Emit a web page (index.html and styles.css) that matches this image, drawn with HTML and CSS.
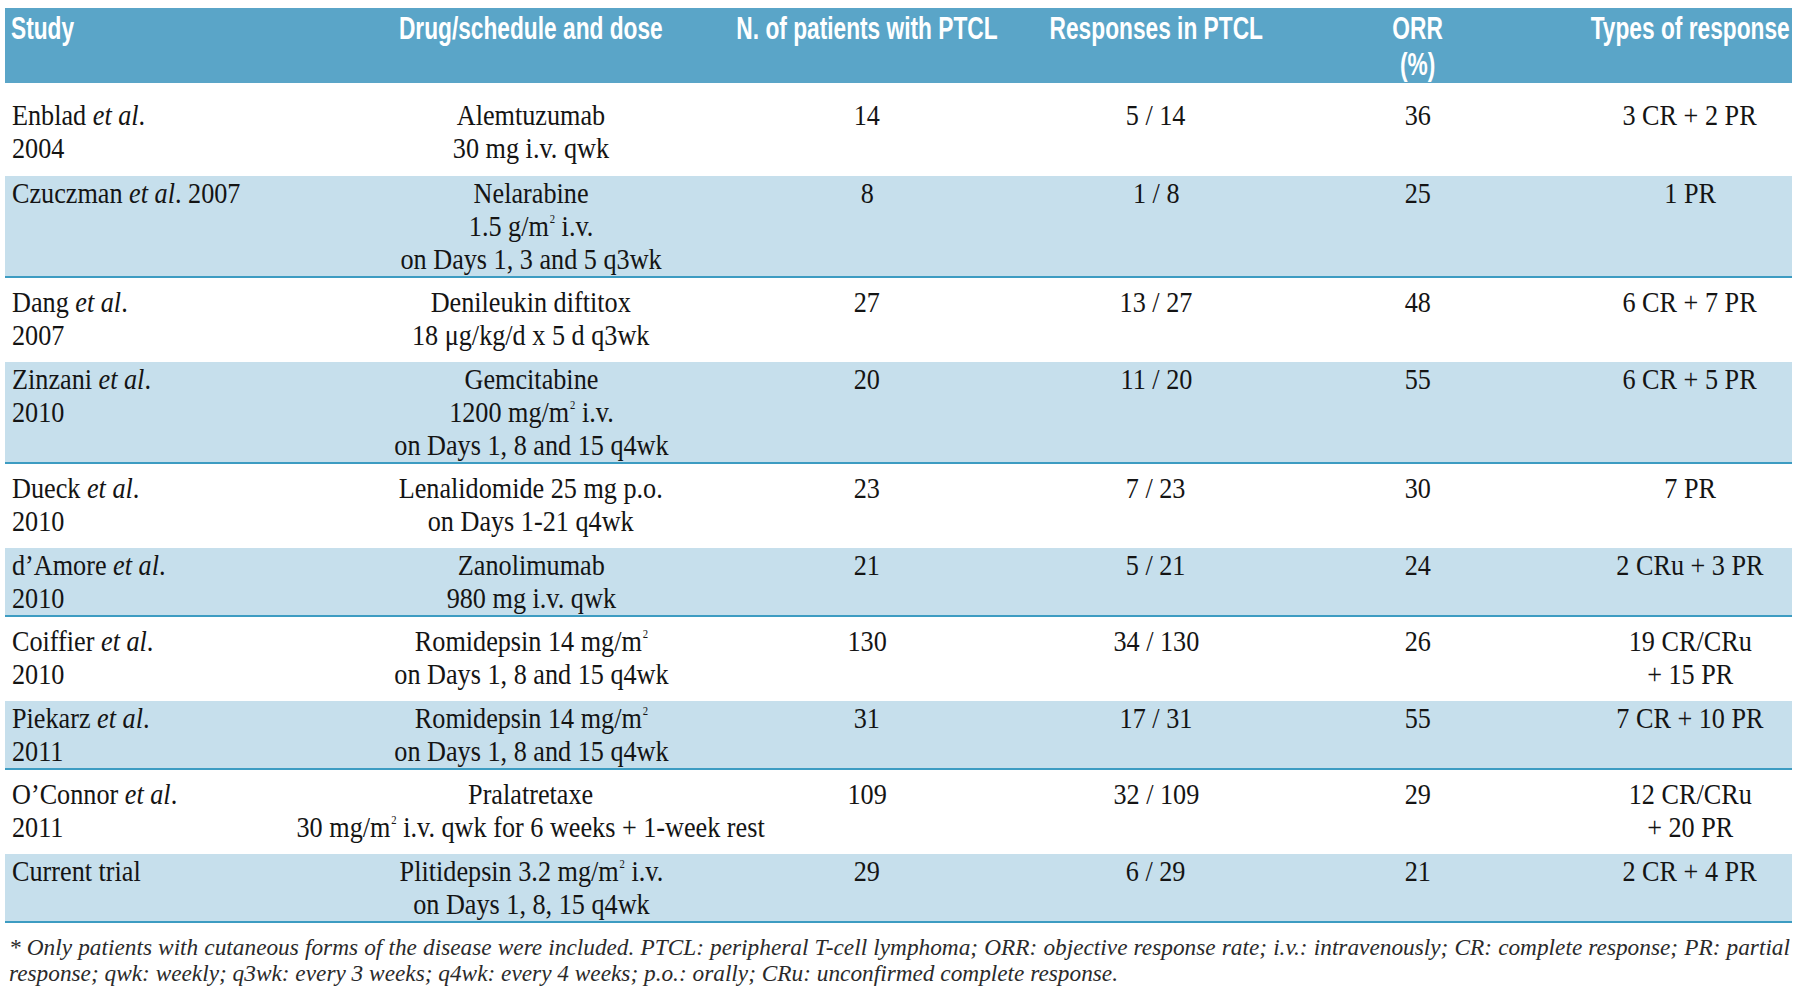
FILE: index.html
```html
<!DOCTYPE html>
<html lang="en">
<head>
<meta charset="utf-8">
<title>PTCL trials</title>
<link rel="stylesheet" href="styles.css">
</head>
<body>
<div class="table">
  <div class="row head">
    <div class="cell study"><span class="t">Study</span></div>
    <div class="cell"><span class="t">Drug/schedule and dose</span></div>
    <div class="cell"><span class="t">N. of patients with PTCL</span></div>
    <div class="cell"><span class="t">Responses in PTCL</span></div>
    <div class="cell"><span class="t">ORR<br>(%)</span></div>
    <div class="cell"><span class="t">Types of response</span></div>
  </div>
  <div class="row white first">
    <div class="cell study"><span class="t">Enblad <i>et al</i>.<br>2004</span></div>
    <div class="cell"><span class="t">Alemtuzumab<br>30 mg i.v. qwk</span></div>
    <div class="cell"><span class="t">14</span></div>
    <div class="cell"><span class="t">5 / 14</span></div>
    <div class="cell"><span class="t">36</span></div>
    <div class="cell"><span class="t">3 CR + 2 PR</span></div>
  </div>
  <div class="row blue">
    <div class="cell study"><span class="t">Czuczman <i>et al</i>. 2007</span></div>
    <div class="cell"><span class="t">Nelarabine<br>1.5 g/m<sup>2</sup> i.v.<br>on Days 1, 3 and 5 q3wk</span></div>
    <div class="cell"><span class="t">8</span></div>
    <div class="cell"><span class="t">1 / 8</span></div>
    <div class="cell"><span class="t">25</span></div>
    <div class="cell"><span class="t">1 PR</span></div>
  </div>
  <div class="row white">
    <div class="cell study"><span class="t">Dang <i>et al</i>.<br>2007</span></div>
    <div class="cell"><span class="t">Denileukin diftitox<br>18 &mu;g/kg/d x 5 d q3wk</span></div>
    <div class="cell"><span class="t">27</span></div>
    <div class="cell"><span class="t">13 / 27</span></div>
    <div class="cell"><span class="t">48</span></div>
    <div class="cell"><span class="t">6 CR + 7 PR</span></div>
  </div>
  <div class="row blue">
    <div class="cell study"><span class="t">Zinzani <i>et al</i>.<br>2010</span></div>
    <div class="cell"><span class="t">Gemcitabine<br>1200 mg/m<sup>2</sup> i.v.<br>on Days 1, 8 and 15 q4wk</span></div>
    <div class="cell"><span class="t">20</span></div>
    <div class="cell"><span class="t">11 / 20</span></div>
    <div class="cell"><span class="t">55</span></div>
    <div class="cell"><span class="t">6 CR + 5 PR</span></div>
  </div>
  <div class="row white">
    <div class="cell study"><span class="t">Dueck <i>et al</i>.<br>2010</span></div>
    <div class="cell"><span class="t">Lenalidomide 25 mg p.o.<br>on Days 1-21 q4wk</span></div>
    <div class="cell"><span class="t">23</span></div>
    <div class="cell"><span class="t">7 / 23</span></div>
    <div class="cell"><span class="t">30</span></div>
    <div class="cell"><span class="t">7 PR</span></div>
  </div>
  <div class="row blue">
    <div class="cell study"><span class="t">d&rsquo;Amore <i>et al</i>.<br>2010</span></div>
    <div class="cell"><span class="t">Zanolimumab<br>980 mg i.v. qwk</span></div>
    <div class="cell"><span class="t">21</span></div>
    <div class="cell"><span class="t">5 / 21</span></div>
    <div class="cell"><span class="t">24</span></div>
    <div class="cell"><span class="t">2 CRu + 3 PR</span></div>
  </div>
  <div class="row white">
    <div class="cell study"><span class="t">Coiffier <i>et al</i>.<br>2010</span></div>
    <div class="cell"><span class="t">Romidepsin 14 mg/m<sup>2</sup><br>on Days 1, 8 and 15 q4wk</span></div>
    <div class="cell"><span class="t">130</span></div>
    <div class="cell"><span class="t">34 / 130</span></div>
    <div class="cell"><span class="t">26</span></div>
    <div class="cell"><span class="t">19 CR/CRu<br>+ 15 PR</span></div>
  </div>
  <div class="row blue">
    <div class="cell study"><span class="t">Piekarz <i>et al</i>.<br>2011</span></div>
    <div class="cell"><span class="t">Romidepsin 14 mg/m<sup>2</sup><br>on Days 1, 8 and 15 q4wk</span></div>
    <div class="cell"><span class="t">31</span></div>
    <div class="cell"><span class="t">17 / 31</span></div>
    <div class="cell"><span class="t">55</span></div>
    <div class="cell"><span class="t">7 CR + 10 PR</span></div>
  </div>
  <div class="row white">
    <div class="cell study"><span class="t">O&rsquo;Connor <i>et al</i>.<br>2011</span></div>
    <div class="cell"><span class="t">Pralatretaxe<br>30 mg/m<sup>2</sup> i.v. qwk for 6 weeks + 1-week rest</span></div>
    <div class="cell"><span class="t">109</span></div>
    <div class="cell"><span class="t">32 / 109</span></div>
    <div class="cell"><span class="t">29</span></div>
    <div class="cell"><span class="t">12 CR/CRu<br>+ 20 PR</span></div>
  </div>
  <div class="row blue">
    <div class="cell study"><span class="t">Current trial</span></div>
    <div class="cell"><span class="t">Plitidepsin 3.2 mg/m<sup>2</sup> i.v.<br>on Days 1, 8, 15 q4wk</span></div>
    <div class="cell"><span class="t">29</span></div>
    <div class="cell"><span class="t">6 / 29</span></div>
    <div class="cell"><span class="t">21</span></div>
    <div class="cell"><span class="t">2 CR + 4 PR</span></div>
  </div>
</div>
<p class="note">* Only patients with cutaneous forms of the disease were included. PTCL: peripheral T-cell lymphoma; ORR: objective response rate; i.v.: intravenously; CR: complete response; PR: partial response; qwk: weekly; q3wk: every 3 weeks; q4wk: every 4 weeks; p.o.: orally; CRu: unconfirmed complete response.</p>
</body>
</html>
```

FILE: styles.css
```css
html, body {
  margin: 0;
  padding: 0;
  background: #ffffff;
}

.table {
  margin: 8px 0 0 5px;
  width: 1787px;
  font-family: "Liberation Serif", "Times New Roman", serif;
  font-size: 29.5px;
  line-height: 33px;
  color: #141414;
}

.row {
  display: grid;
  grid-template-columns: 387px 278px 394px 184px 340px 204px;
  box-sizing: border-box;
}

.cell {
  display: flex;
  flex-direction: column;
  align-items: center;
  min-width: 0;
}

.cell.study {
  align-items: flex-start;
  padding-left: 7px;
}

.t {
  display: block;
  white-space: nowrap;
  text-align: center;
  transform: scaleX(0.888);
  transform-origin: 50% 0;
}

.study .t {
  text-align: left;
  transform-origin: 0 0;
}

.t sup {
  font-size: 12px;
  line-height: 0;
  vertical-align: 13px;
  margin-left: 1px;
}

.head {
  height: 75px;
  padding-top: 1.5px;
  background: #5aa5c8;
  color: #ffffff;
  font-family: "Liberation Sans", Arial, sans-serif;
  font-weight: bold;
  font-size: 32px;
  line-height: 36px;
}

.head .cell.study {
  padding-left: 6px;
}

.head .t {
  transform: scaleX(0.71);
}

.white {
  padding: 8px 0 10px;
}

.white.first {
  padding: 16px 0 11px;
}

.blue {
  background: #c6dfec;
  padding: 1px 0 0;
  border-bottom: 2px solid #3d9cc2;
}

.note {
  margin: 11px 0 0 9px;
  width: 1781px;
  font-family: "Liberation Serif", "Times New Roman", serif;
  font-style: italic;
  font-size: 23.3px;
  line-height: 26px;
  color: #2a2a2a;
  text-align: justify;
}
```
